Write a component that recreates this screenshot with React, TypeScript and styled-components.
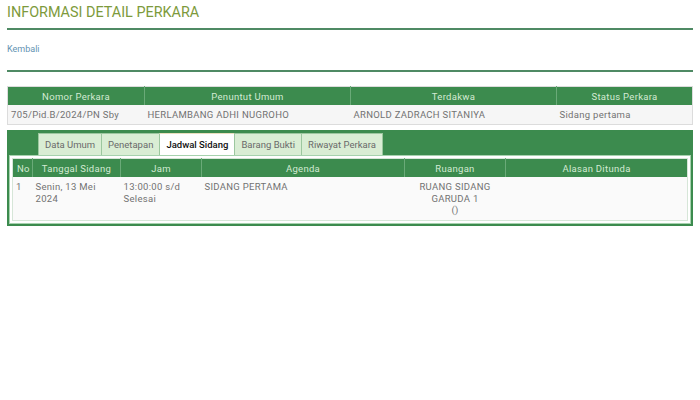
import React from 'react';
import styled, { createGlobalStyle } from 'styled-components';

const GlobalStyle = createGlobalStyle`
  body {
    margin: 0;
    background: #fff;
    font-family: Roboto, 'Liberation Sans', sans-serif;
  }
`;

const GREEN = '#3c8b4e';

const Page = styled.div`
  padding: 4px 7px;
`;

const Title = styled.h1`
  margin: 0;
  font-size: 14.4px;
  font-weight: 400;
  color: #7d9a3c;
  line-height: 18px;
  padding-bottom: 6px;
  border-bottom: 2px solid #4f8a64;
`;

const BackBar = styled.div`
  font-size: 9px;
  line-height: 11px;
  padding: 14px 0 15px;
  border-bottom: 2px solid #4f8a64;
`;

const BackLink = styled.a`
  color: #6393b3;
  text-decoration: none;
`;

const Table = styled.table`
  width: 100%;
  border-collapse: collapse;
  font-size: 9.5px;
  letter-spacing: 0.3px;
  table-layout: fixed;
`;

const InfoTable = styled(Table)`
  margin-top: 14px;
  border: 1px solid #dcdcdc;
`;

const Th = styled.th`
  background: ${GREEN};
  color: #d3ead3;
  font-weight: 400;
  height: 18px;
  padding: 0 4px;
  text-align: center;
  border-left: 1px solid #6aaa78;
  &:first-child {
    border-left: none;
  }
`;

const Td = styled.td<{ $center?: boolean }>`
  color: #727272;
  padding: 4px 3px;
  vertical-align: top;
  text-align: ${(p) => (p.$center ? 'center' : 'left')};
  line-height: 11px;
`;

const InfoRow = styled.tr`
  background: #f6f6f6;
  td {
    height: 11px;
    padding: 4px 3px;
  }
`;

const Panel = styled.div`
  margin-top: 5px;
  background: ${GREEN};
  padding: 3px 2px 2px;
`;

const Tabs = styled.div`
  display: flex;
  padding-left: 30px;
  height: 22px;
`;

const Tab = styled.div<{ $active?: boolean }>`
  font-size: 9.5px;
  padding: 0 6px;
  display: flex;
  align-items: center;
  color: ${(p) => (p.$active ? '#111' : '#6a6a6a')};
  font-weight: ${(p) => (p.$active ? 500 : 400)};
  background: ${(p) => (p.$active ? '#fff' : '#d9edd4')};
  border: 1px solid #9cc79f;
  border-top: 1px solid ${(p) => (p.$active ? '#eadfbe' : '#9cc79f')};
  border-bottom: none;
  margin-left: -1px;
`;

const Content = styled.div`
  background: #fff;
  border: 1px solid #a6d2ae;
  padding: 2px 2px 2px;
`;

const ScheduleTable = styled(Table)`
  border: 1px solid #d6e6d8;
`;

const ScheduleRow = styled.tr`
  background: #fafafa;
  td {
    height: 32px;
    line-height: 11.5px;
  }
`;

const infoHeaders = [
  { label: 'Nomor Perkara', w: 137 },
  { label: 'Penuntut Umum', w: 206 },
  { label: 'Terdakwa', w: 206 },
  { label: 'Status Perkara' },
];

const tabs = ['Data Umum', 'Penetapan', 'Jadwal Sidang', 'Barang Bukti', 'Riwayat Perkara'];

const scheduleHeaders = [
  { label: 'No', w: 20 },
  { label: 'Tanggal Sidang', w: 88 },
  { label: 'Jam', w: 81 },
  { label: 'Agenda', w: 203 },
  { label: 'Ruangan', w: 101 },
  { label: 'Alasan Ditunda' },
];

type Header = { label: string; w?: number };

const Cols: React.FC<{ headers: Header[] }> = ({ headers }) => (
  <colgroup>
    {headers.map((h) => (
      <col key={h.label} style={h.w ? { width: h.w } : undefined} />
    ))}
  </colgroup>
);

const App: React.FC = () => {
  return (
    <>
      <GlobalStyle />
      <Page>
        <Title>INFORMASI DETAIL PERKARA</Title>
        <BackBar>
          <BackLink href="#">Kembali</BackLink>
        </BackBar>

        <InfoTable>
          <Cols headers={infoHeaders} />
          <thead>
            <tr>
              {infoHeaders.map((h) => (
                <Th key={h.label}>{h.label}</Th>
              ))}
            </tr>
          </thead>
          <tbody>
            <InfoRow>
              <Td>705/Pid.B/2024/PN Sby</Td>
              <Td>HERLAMBANG ADHI NUGROHO</Td>
              <Td>ARNOLD ZADRACH SITANIYA</Td>
              <Td>Sidang pertama</Td>
            </InfoRow>
          </tbody>
        </InfoTable>

        <Panel>
          <Tabs>
            {tabs.map((t) => (
              <Tab key={t} $active={t === 'Jadwal Sidang'}>
                {t}
              </Tab>
            ))}
          </Tabs>
          <Content>
            <ScheduleTable>
              <Cols headers={scheduleHeaders} />
              <thead>
                <tr>
                  {scheduleHeaders.map((h) => (
                    <Th key={h.label}>{h.label}</Th>
                  ))}
                </tr>
              </thead>
              <tbody>
                <ScheduleRow>
                  <Td>1</Td>
                  <Td>Senin, 13 Mei 2024</Td>
                  <Td>13:00:00 s/d Selesai</Td>
                  <Td>SIDANG PERTAMA</Td>
                  <Td $center>
                    RUANG SIDANG GARUDA 1
                    <br />()
                  </Td>
                  <Td></Td>
                </ScheduleRow>
              </tbody>
            </ScheduleTable>
          </Content>
        </Panel>
      </Page>
    </>
  );
};

export default App;
